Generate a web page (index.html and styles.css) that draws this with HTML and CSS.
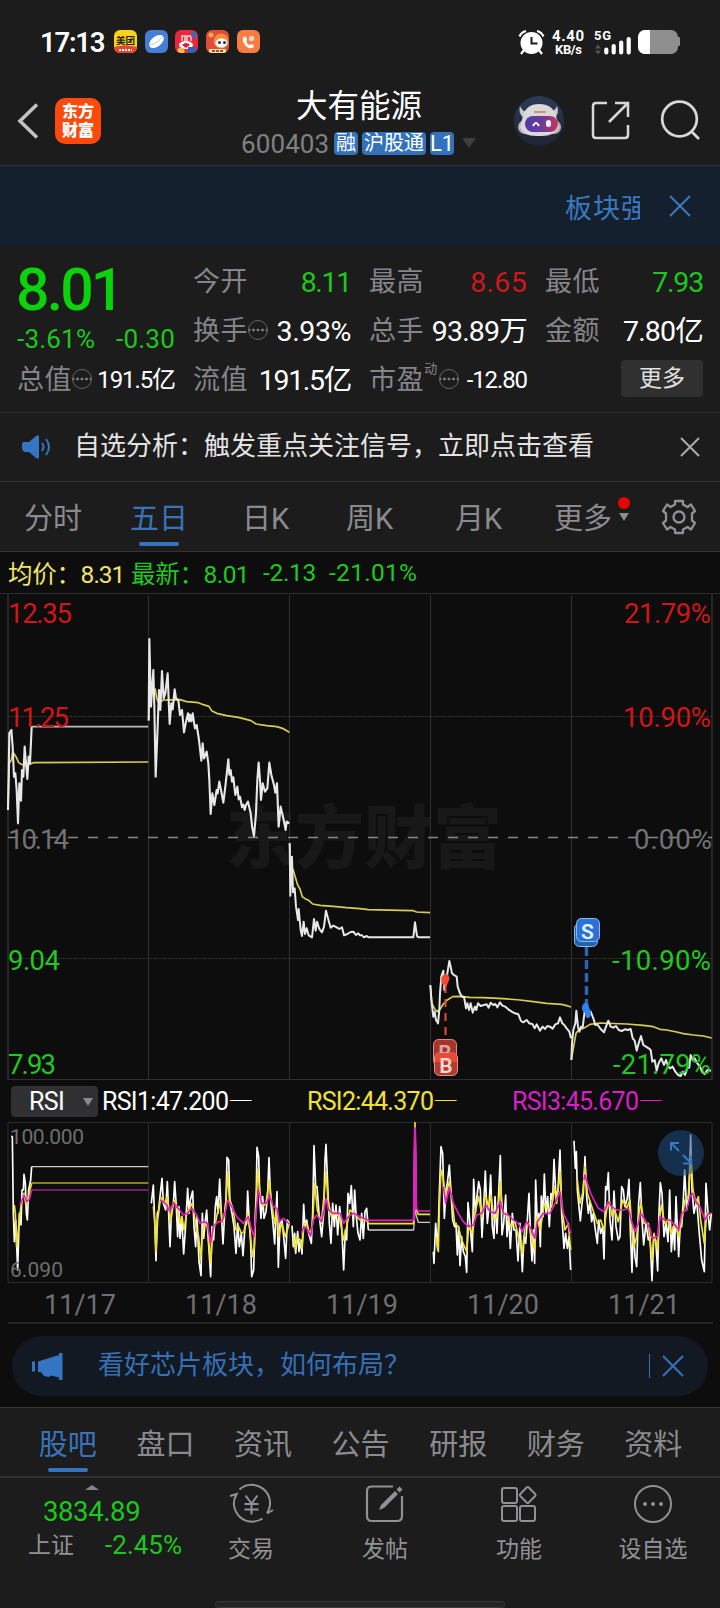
FILE: index.html
```html
<!DOCTYPE html>
<html lang="zh-CN">
<head>
<meta charset="utf-8">
<title>大有能源 600403</title>
<link rel="stylesheet" href="styles.css">
</head>
<body>
<div class="app">
  <header class="top">
    <div class="status">
      <span class="clock">17:13</span>
      <svg class="apps" width="146" height="24" viewBox="0 0 146 24">
        <defs><clipPath id="r1"><rect width="23" height="23" rx="6"/></clipPath></defs>
        <g clip-path="url(#r1)"><rect width="23" height="23" fill="#f8d21c"/><path d="M0 17Q11 14 23 17V23H0Z" fill="#e8442e"/><text x="2" y="13.500" class="cjk" font-size="9.500" font-weight="700" fill="#241c08">美团</text><path d="M5 20h13" stroke="#fff" stroke-width="2" stroke-dasharray="2 1"/></g>
        <g transform="translate(31)"><rect width="23" height="23" rx="6" fill="#437fd9"/><ellipse cx="11.500" cy="11.500" rx="8.500" ry="5" fill="#fff" transform="rotate(-38 11.500 11.500)"/><path d="M5 15Q12 14 18 6" stroke="#a9cdf7" fill="none"/></g>
        <g transform="translate(61)" clip-path="url(#r1)"><rect width="23" height="23" fill="#e9283d"/><path d="M7 11V6h3v5M12 11V6h4v5" stroke="#fbd3cf" stroke-width="1.500" fill="none"/><circle cx="19" cy="5" r="3" fill="#416ab5"/><ellipse cx="11" cy="15" rx="7" ry="4" fill="#fff"/><path d="M7 15q4-4 8 0l-4 3z" fill="#d71e35"/><circle cx="6" cy="21" r="3.500" fill="#f4bd4a"/><rect x="13" y="17" width="8" height="6" fill="#2e62b8"/></g>
        <g transform="translate(92)" clip-path="url(#r1)"><rect width="23" height="23" fill="#df4a3b"/><circle cx="5" cy="5" r="2.500" fill="#f6b04a"/><circle cx="15" cy="11" r="7.500" fill="#f28f3c"/><ellipse cx="15.500" cy="13" rx="6" ry="4.500" fill="#fff"/><circle cx="13.500" cy="12.500" r="1.500" fill="#33304a"/><circle cx="18.500" cy="12.500" r="1.500" fill="#33304a"/><path d="M3 19h17v4H3z" fill="#f8dfa5"/><path d="M6 21h11" stroke="#8c5b25" stroke-width="2" stroke-dasharray="3 1"/></g>
        <g transform="translate(123)"><rect width="23" height="23" rx="6" fill="#f67c41"/><path d="M7 6.500Q5 8 6 11.500 8 16.500 12.500 18.200 15.500 18.500 17.200 16.800 17 14.500 14.300 14 13 15.200 12 14.800 9.800 13.200 9.300 11.400 10.600 10 9.800 8 8.800 6 7 6.500Z" fill="#fff"/><circle cx="14.500" cy="8.500" r="2.700" fill="#ffd8c4"/></g>
      </svg>
      <svg class="sys" width="162" height="26" viewBox="518 29 162 26">
        <circle cx="531.500" cy="43" r="11" fill="#fff"/><path d="M531.500 37v6.500h6" stroke="#1c1c1c" stroke-width="2" fill="none"/><path d="M519.500 36.500Q521.500 32 526 31M543.500 36.500Q541.500 32 537 31M524 50l-3 4M539 50l3 4" stroke="#fff" stroke-width="2.200" fill="none"/>
        <g class="lat" fill="#fff" font-weight="700"><text x="552" y="41" font-size="15" textLength="32">4.40</text><text x="555" y="53.500" font-size="13" textLength="27">KB/s</text><text x="594" y="40" font-size="13" textLength="17">5G</text></g>
        <path d="M595 48.500l3-4 3 4zM595 50.500l3 4 3-4z" fill="#555"/>
        <path d="M606.300 49.500v3M613.700 46v6.500M621.200 42.500v10M628.700 39v13.500" stroke="#fff" stroke-width="4.200" stroke-linecap="round"/>
        <rect x="638" y="30" width="40" height="24" rx="7" fill="#8f8f8f"/><path d="M650 30h-5a7 7 0 0 0-7 7v10a7 7 0 0 0 7 7h5z" fill="#fff"/><rect x="677" y="37" width="3" height="9" rx="1" fill="#8f8f8f"/>
      </svg>
    </div>
    <div class="nav">
      <svg class="back" width="22" height="36" viewBox="0 0 22 36"><path d="M20 1.500 3 18l17 16.500" fill="none" stroke="#c2c2c2" stroke-width="3.600"/></svg>
      <div class="logo"><span>东方</span><span>财富</span></div>
      <div class="stock">
        <h1>大有能源</h1>
        <div class="sub"><span class="code">600403</span><b>融</b><b>沪股通</b><b class="l1">L1</b><i></i></div>
      </div>
      <svg class="robot" width="50" height="50" viewBox="0 0 50 50">
        <defs><linearGradient id="vis"><stop offset="0" stop-color="#4e3ba6"/><stop offset=".5" stop-color="#6a3c9b"/><stop offset="1" stop-color="#c4365b"/></linearGradient><linearGradient id="sky" x2="0" y2="1"><stop offset="0" stop-color="#2b3b59"/><stop offset="1" stop-color="#1e2431"/></linearGradient></defs>
        <circle cx="25" cy="25" r="25" fill="url(#sky)"/><path d="M6 10q-2 8 4 12l3-6q-5-1-7-6M43 10q3 8-3 12l-4-6q5-1 7-6" fill="#cbc6cb"/><rect x="4" y="24" width="43" height="14" rx="7" fill="#b5b0b5"/><path d="M25 8Q39 8 42 20L45 31Q40 41 25 40 9 41 6 31L9 20Q12 8 25 8Z" fill="#dcd7d8"/><path d="M20 16h12" stroke="#c69877" stroke-width="2"/><rect x="11" y="20" width="33" height="16" rx="8" fill="url(#vis)"/><path d="M19 30q3-6 6 0" fill="none" stroke="#fff" stroke-width="2"/><rect x="32" y="24" width="5" height="7" rx="2.500" fill="#eee"/>
      </svg>
      <svg class="share" width="40" height="40" viewBox="0 0 40 40"><path d="M16 2H5Q2 2 2 5v29q0 3 3 3h29q3 0 3-3V24M24 2h13v14M37 2 18 21" fill="none" stroke="#d8d8d8" stroke-width="2.500"/></svg>
      <svg class="find" width="41" height="41" viewBox="0 0 41 41"><circle cx="19.500" cy="19" r="17.300" fill="none" stroke="#d8d8d8" stroke-width="2.700"/><path d="M31 31l8 8" stroke="#d8d8d8" stroke-width="2.700"/></svg>
    </div>
  </header>

  <div class="ticker"><span class="crawl">板块强</span><svg width="22" height="22" viewBox="0 0 22 22"><path d="M1 1l20 20M21 1 1 21" stroke="#3b78c2" stroke-width="2"/></svg></div>

  <section class="quote">
    <div class="col">
      <div class="price">8.01</div>
      <div class="chg"><span>-3.61%</span><span>-0.30</span></div>
      <div class="row"><span class="k">总值</span><i class="tip"></i><span class="v sm">191.5亿</span></div>
    </div>
    <div class="col">
      <div class="row"><span class="k">今开</span><span class="v up n11">8.11</span></div>
      <div class="row"><span class="k">换手</span><i class="tip"></i><span class="v pct">3.93%</span></div>
      <div class="row"><span class="k">流值</span><span class="v n19">191.5亿</span></div>
    </div>
    <div class="col">
      <div class="row"><span class="k">最高</span><span class="v down">8.65</span></div>
      <div class="row"><span class="k">总手</span><span class="v">93.89万</span></div>
      <div class="row"><span class="k">市盈</span><sup>动</sup><i class="tip"></i><span class="v sm">-12.80</span></div>
    </div>
    <div class="col">
      <div class="row"><span class="k">最低</span><span class="v up n79">7.93</span></div>
      <div class="row"><span class="k">金额</span><span class="v">7.80亿</span></div>
      <div class="row"><button class="more">更多</button></div>
    </div>
  </section>

  <div class="notice">
    <svg width="29" height="24" viewBox="0 0 29 24"><path d="M1 7h6L14 1q3-2 3 1v20q0 3-3 1l-7-6H3q-3-1-3-4V10q0-2 1-3Z" fill="#3476c4"/><path d="M20 8q3 4 0 8M24 4q6 8 0 16" fill="none" stroke="#3476c4" stroke-width="2"/></svg>
    <span>自选分析：触发重点关注信号，立即点击查看</span>
    <svg width="20" height="20" viewBox="0 0 20 20"><path d="M1 1l18 18M19 1 1 19" stroke="#aaa" stroke-width="2"/></svg>
  </div>

  <nav class="periods">
    <span>分时</span><span class="on">五日</span><span>日K</span><span>周K</span><span>月K</span><span class="drop">更多<i class="dot"></i><i class="tri"></i></span>
    <svg width="36" height="36" viewBox="-18 -18 36 36"><path d="M-4-16H4V-12.500L8.500-10 12-12.500 16-6 13-3.500V3.500L16 6 12 12.500 8.500 10 4 12.500V16H-4V12.500L-8.500 10-12 12.500-16 6-13 3.500V-3.500L-16-6-12-12.500-8.500-10-4-12.500Z" fill="none" stroke="#919195" stroke-width="2.300" stroke-linejoin="round"/><circle r="5.500" fill="none" stroke="#919195" stroke-width="2.300"/></svg>
  </nav>

  <div class="latest"><span class="avg">均价：<em>8.31</em></span><span class="new">最新：<em>8.01</em></span><span>-2.13</span><span class="total">-21.01%</span></div>

  <svg class="price-chart" width="720" height="488" viewBox="0 593 720 488">
    <text x="226" y="863" class="cjk" font-size="69" font-weight="900" textLength="276" fill="#181818">东方财富</text>
    <g fill="none" stroke="#303032" stroke-width="1">
      <path d="M0 593.500H720M7.500 1079.500H712.500M148.500 595V1080M289.500 595V1080M430.500 595V1080M571.500 595V1080"/>
      <path d="M8 594V1080M712 594V1080" stroke-width="1.500"/>
      <path d="M8 716.500H712M8 958.500H712" stroke="#38383a" stroke-dasharray="1.500 1"/>
      <path d="M8 837.500H712" stroke="#868686" stroke-width="1.300" stroke-dasharray="10 10"/>
    </g>
    <g fill="none" stroke-linejoin="round">
      <g transform="translate(0 480) scale(.33333)" stroke="#d9cc55" stroke-width="5">
        <path d="M24 990 28 850 34 840 38 815 48 830 56 848 64 853 84 855 100 848 445 846"/>
        <path d="M446 720 450 600 460 625 466 628 470 655 476 668 490 660 540 659 560 665 595 668 610 674 627 679 635 692 650 700 680 707 715 712 730 716 753 722 768 732 800 737 830 740 850 746 868 757"/>
      </g>
      <g transform="translate(0 830) scale(.33333)" stroke="#d9cc55" stroke-width="5">
        <path d="M869 40 871 110 879 118 886 142 893 165 900 177 907 200 915 206 926 211 938 222 960 226 1000 229 1040 233 1080 236 1105 239 1200 241 1240 242 1250 246 1290 248"/>
        <path transform="translate(1080)" d="M211 465 216 520 224 537 232 545 240 538 250 522 262 510 278 500 300 499 330 502 370 503 430 506 480 510 520 515 560 520 605 523 620 527 633 531M634 690 640 655 648 610 656 600 666 597 676 592 690 583 720 579 800 582 850 586 880 590 900 598 920 600 950 606 970 611 1000 615 1030 618 1055 624"/>
      </g>
      <g transform="translate(0 480) scale(.33333)" stroke="#e8e8e8" stroke-width="6.300">
        <path d="M24 990 28 760 34 750 38 800 42 890 46 880 50 930 54 1030 58 910 63 962 66 870 70 890 74 800 78 850 82 897 86 830 90 850 95 740"/><path d="M95 740H445" stroke="#bbb" stroke-width="5"/>
        <path d="M446 722 448 477 451 600 453 680 460 570 463 680 467 890 473 740 477 630 481 690 486 573 491 655 496 640 503 580 506 660 509 732 514 670 518 688 524 628 528 655 535 660 540 705 546 690 552 757 558 725 564 700 567 724 570 704 574 724 578 700 582 728 585 745 590 735 597 780 604 842 608 790 612 835 620 815 625 850 628 900 632 1002 637 940 643 975 650 930 653 940 658 905 664 935 670 968 676 920 685 838 688 884 692 870 696 905 700 892 706 945 712 920 716 958 720 950 726 982 730 974 734 990 738 975 744 965 752 1000 757 1045 762 1068 768 1000 772 900 776 848 780 900 783 960 788 910 795 935 802 925 808 848 814 885 822 915 826 938 831 910 836 1040 842 980 850 1015 857 1050 860 1025 868 1030"/>
      </g>
      <g transform="translate(0 830) scale(.33333)" stroke="#e8e8e8" stroke-width="6">
        <path d="M869 40 871 197 876 80 879 187 884 175 888 230 894 270 896 237 902 300 906 318 911 275 915 312 920 295 926 316 936 322 942 267 947 302 951 275 958 297 966 307 972 290 978 242 986 272 992 293 1000 287 1010 292 1018 297 1026 292 1032 316 1042 312 1052 306 1060 305 1068 315 1075 310 1080 316 1086 316 1092 322 1100 318 1105 322 1240 322 1245 277 1251 318 1255 322 1290 322"/>
        <path transform="translate(1080)" d="M211 465 214 510 220 560 224 545 228 570 234 580 238 540 240 490 244 440 250 422 253 480 258 460 262 430 268 393 272 410 276 430 282 435 290 440 293 470 300 490 306 500 312 500 318 535 322 520 327 540 332 520 338 548 345 530 349 540 354 520 362 528 372 525 380 523 386 533 392 518 400 525 406 522 412 532 420 517 427 527 436 530 445 538 455 545 465 550 475 553 483 573 490 577 500 570 508 580 518 583 524 595 530 583 540 602 548 590 555 597 562 588 570 590 578 596 586 583 594 580 600 562 607 580 613 585 620 595 628 605 633 625M634 690 636 640 640 600 646 580 649 542 654 590 658 605 663 590 668 592 672 560 677 525 683 560 692 545 700 565 706 585 712 583 722 597 732 607 738 590 745 572 752 590 760 593 768 588 776 600 785 603 795 598 803 600 812 597 818 625 824 632 830 662 836 640 843 618 850 645 858 650 866 655 872 660 877 695 884 690 890 722 896 700 904 685 912 705 918 690 924 708 930 715 938 710 946 725 954 735 962 738 968 725 975 735 982 715 988 712 992 675 998 690 1004 685 1012 700 1020 710 1026 725 1034 732 1042 720 1053 722"/>
      </g>
    </g>
    <g class="lat axis">
      <g fill="#d01616"><text x="8" y="623" textLength="64">12.35</text><text x="8" y="727" textLength="61">11.25</text><text x="624" y="623" textLength="87">21.79%</text><text x="623" y="727" textLength="88">10.90%</text></g>
      <g fill="#737373"><text x="8" y="849" textLength="61">10.14</text><text x="634" y="849" textLength="78">0.00%</text></g>
      <g fill="#20c820"><text x="8" y="970" textLength="52">9.04</text><text x="8" y="1074" textLength="48">7.93</text><text x="612" y="970" textLength="99">-10.90%</text><text x="613" y="1074" textLength="98">-21.79%</text></g>
    </g>
    <path d="M445.500 985V1040" stroke="#ee4932" stroke-width="2" stroke-dasharray="8 6"/><path d="M441.500 978q1-3.500 4-4 4 .5 4 5-1 3-3 7l-1.500-2-1 2q-4-4-2.500-8" fill="#f4492f"/>
    <g class="lat tag"><rect x="433.500" y="1039.500" width="23" height="26" rx="5" fill="#a7342a" stroke="#dd8c80"/><text x="445" y="1060" fill="#d9a8a2">B</text><rect x="434.500" y="1053" width="23" height="22.500" rx="5" fill="#b03b2e" stroke="#e2968a"/><path d="M435 1057q0-4 5-4h12q5 0 5 4v5h-22z" fill="#e74a38"/><text x="446" y="1072.500" fill="#f4d8d4">B</text></g>
    <path d="M586.500 947V1007" stroke="#2766b5" stroke-width="3.500" stroke-dasharray="9 4"/><ellipse cx="585.500" cy="1008" rx="3.500" ry="5" fill="#3184ed"/><ellipse cx="588" cy="1013" rx="3" ry="5" fill="#3184ed"/>
    <g class="lat tag"><rect x="574.500" y="923.500" width="23" height="23" rx="5" fill="#2162ae" stroke="#94b9e8"/><rect x="576.500" y="918.500" width="23" height="23" rx="5" fill="#2a72d8" stroke="#94b9e8"/><text x="587.500" y="938.500" fill="#e8f1ff">S</text></g>
  </svg>

  <div class="rsi-head"><button>RSI<i class="tri"></i></button><span class="w">RSI1:47.200<em>—</em></span><span class="y">RSI2:44.370<em>—</em></span><span class="m">RSI3:45.670<em>—</em></span></div>

  <svg class="rsi-chart" width="720" height="162" viewBox="0 1122 720 162">
    <path d="M8 1122.500H712M8 1282.500H712M8 1122V1283M148.500 1122V1283M289.500 1122V1283M430.500 1122V1283M571.500 1122V1283M712 1122V1283" fill="none" stroke="#2c2c2e"/>
    <g transform="translate(0 1080) scale(.33333)" fill="none" stroke-width="5" stroke-linejoin="round">
      <g stroke="#fff">
        <path d="M34 168 37 170 40 400 43 485 47 420 53 570 58 400 63 435 66 330 70 330 72 283 76 310 79 400 82 420 86 330 92 300 95 260"/><path d="M95 260H445" stroke="#ccc" stroke-width="4"/>
        <path d="M454 370 460 315 464 420 468 542 472 400 476 390 480 350 486 295 490 370 497 390 502 305 506 400 510 500 515 380 520 375 524 305 529 380 533 470 537 380 540 475 545 410 551 522 556 450 563 325 567 400 571 360 578 333 582 440 587 500 591 410 597 545 603 587 607 400 611 475 615 430 620 390 625 480 632 590 636 440 641 480 646 380 650 350 654 400 659 297 664 400 669 492 674 400 678 360 681 232 686 240 690 370 696 400 702 440 708 520 713 430 718 500 724 460 729 527 735 440 740 430 743 333 748 430 752 490 755 590 761 570 765 430 769 330 771 202 776 230 780 370 783 415 788 350 792 415 798 395 803 340 807 233 812 360 818 420 824 492 828 400 831 335 835 562 840 430 846 420 851 470 857 535 862 420 868 430"/>
        <path d="M876 437 880 500 884 460 887 520 893 455 897 515 902 480 906 522 911 373 915 440 920 420 926 460 934 490 938 400 942 197 947 320 951 320 957 400 965 470 971 400 975 240 978 193 982 290 988 430 993 490 998 370 1003 440 1008 375 1013 465 1019 380 1025 440 1031 570 1036 450 1040 480 1044 340 1049 370 1054 317 1060 440 1064 330 1068 400 1074 460 1080 480 1085 400 1090 475 1095 395 1100 385 1105 450"/><path d="M1105 450H1241L1245 390 1250 410 1255 427H1290" stroke="#ccc" stroke-width="4"/>
        <path transform="translate(1080)" d="M220 515 222 550 227 430 233 510 238 340 243 200 248 220 253 415 258 330 262 310 268 255 272 320 278 420 284 440 288 430 292 525 296 440 300 557 305 470 310 515 316 530 320 577 324 368 330 430 337 515 341 298 346 400 351 350 356 305 361 330 366 472 371 380 376 273 382 430 387 380 392 285 397 440 402 475 405 350 411 460 416 340 421 227 426 465 431 430 437 345 441 470 446 410 451 505 457 400 462 450 468 450 474 543 480 430 487 575 492 470 497 490 502 420 507 340 512 470 516 543 520 450 524 550 527 300 532 430 537 400 541 500 544 348 549 410 553 282 558 400 563 350 568 440 573 340 578 360 582 238 588 350 594 330 600 210 605 400 612 505 617 460 622 505 627 470 632 570M642 182 646 265 649 215 652 330 661 423 665 380 670 340 675 230 680 350 685 400 690 365 695 425 700 400 706 450 712 490 716 420 722 460 728 440 732 537 737 320 741 330 745 278 750 420 756 480 762 333 768 440 775 480 780 470 785 320 790 330 795 380 802 355 807 298 811 450 816 577 820 440 825 530 830 560 836 370 841 308 846 420 851 495 858 430 865 480 870 470 876 602 881 480 887 480 893 573 897 400 901 308 906 340 912 470 918 430 924 485 929 330 934 515 940 440 944 510 948 350 956 530 961 430 965 440 970 360 974 270 980 390 987 340 992 165 996 330 1002 400 1010 360 1017 450 1025 540 1033 575 1038 310 1044 400 1049 450 1054 400"/>
      </g>
      <g stroke="#f0e030">
        <path d="M43 375 46 400 50 500 56 440 62 385 68 350 72 340 78 375 84 360 90 330 95 309"/><path d="M95 309H445" stroke="#b5a52c"/>
        <path d="M460 380 464 420 468 515 473 420 480 365 488 350 494 375 502 350 508 400 512 425 520 370 526 360 532 390 540 430 546 410 552 450 560 400 568 385 576 370 582 400 588 440 596 470 602 540 608 450 616 430 622 440 632 550 638 460 646 430 652 400 660 370 668 430 676 390 683 275 688 355 700 390 708 450 716 440 724 460 732 455 742 400 750 450 757 530 763 500 768 380 773 268 780 340 788 380 798 370 808 300 815 370 824 430 831 390 836 470 845 430 856 470 868 430"/>
        <path d="M880 470 886 510 892 470 900 480 906 505 912 430 920 430 930 465 938 430 944 310 952 390 964 430 972 350 978 275 984 360 994 410 1005 395 1018 410 1031 480 1040 440 1050 390 1062 400 1080 420 1100 420 1105 431 1241 431 1245 128 1249 390 1255 403 1290 403"/>
        <path transform="translate(1080)" d="M228 470 235 515 238 380 243 270 249 290 256 350 268 305 275 350 284 430 295 440 305 480 320 515 326 440 338 460 345 400 356 350 366 410 376 345 386 380 393 345 402 420 412 410 421 305 428 400 440 400 452 440 465 425 475 470 487 520 495 440 507 430 516 480 524 510 530 410 541 450 553 370 565 390 575 380 583 320 590 370 600 275 606 390 615 450 625 430 632 510M652 300 660 370 668 340 675 260 682 340 692 370 702 400 712 430 722 420 732 450 740 390 747 360 757 410 764 390 775 425 788 360 800 385 810 360 816 460 822 500 830 470 838 390 843 370 852 430 865 430 876 540 882 460 893 510 898 420 904 375 914 430 925 420 932 460 945 430 956 470 964 430 975 360 985 350 992 225 999 330 1008 370 1015 350 1022 420 1033 490 1040 400 1054 410"/>
      </g>
      <g stroke="#e21fc4">
        <path d="M60 375 72 345 80 365 88 358 95 330"/><path d="M95 330H445" stroke="#94228c"/>
        <path d="M480 360 490 365 500 375 510 395 520 368 535 385 550 405 562 400 575 385 590 405 600 430 612 425 622 430 632 490 640 440 655 425 665 425 675 400 683 360 695 380 710 410 730 430 745 410 755 450 762 470 768 400 775 330 785 370 800 370 808 345 820 380 831 385 838 425 850 415 868 432"/>
        <path d="M905 460 911 440 920 445 932 468 940 420 950 405 965 425 972 390 978 355 986 390 1000 400 1020 400 1031 430 1045 410 1060 400 1080 410 1105 421 1241 421 1245 150 1249 385 1255 393 1290 393"/><path d="M1242 421 1245 145 1248 385" stroke-width="7"/>
        <path transform="translate(1080)" d="M250 320 257 370 268 322 280 370 295 400 310 425 325 440 340 435 350 405 365 400 378 375 390 395 405 400 421 365 430 400 445 405 460 420 475 430 487 455 500 425 515 450 524 475 532 425 550 400 570 400 585 370 600 335 610 400 620 420 632 460M672 300 675 285 682 310 692 340 702 360 715 385 732 395 745 365 755 380 770 390 790 390 805 385 815 425 825 455 835 430 842 400 852 415 870 445 876 475 893 470 900 410 915 420 930 420 945 435 956 450 965 400 980 390 990 350 998 340 1010 370 1020 380 1035 420 1045 400 1054 400"/>
      </g>
    </g>
    <g class="lat" fill="#6e6e70" font-size="21"><text x="10" y="1144" textLength="74">100.000</text><text x="10" y="1277" textLength="53">6.090</text></g>
    <circle cx="681" cy="1153" r="23" fill="#1f4b80" fill-opacity=".56"/>
    <path d="M671 1150.500V1143H679M672 1144l7 7M691 1156V1163.500H683M690 1162l-7-7" fill="none" stroke="#3678c5" stroke-width="2"/>
  </svg>

  <div class="dates"><span>11/17</span><span>11/18</span><span>11/19</span><span>11/20</span><span>11/21</span></div>

  <div class="promo-wrap"><div class="promo">
    <svg width="31" height="27" viewBox="0 0 31 27"><path d="M0 8.500h3v10H0zM6 8.500 27 2V0h3.500v27H27v-2.500L19 22.500 17 24l-5-1-3-4H6z" fill="#3375c3"/></svg>
    <span>看好芯片板块，如何布局？</span><i class="bar"></i>
    <svg width="22" height="22" viewBox="0 0 22 22"><path d="M1 1l20 20M21 1 1 21" stroke="#366fb5" stroke-width="2.200"/></svg>
  </div></div>

  <nav class="sections"><span class="on">股吧</span><span>盘口</span><span>资讯</span><span>公告</span><span>研报</span><span>财务</span><span>资料</span></nav>

  <footer class="actions">
    <div class="index"><i class="up-tri"></i><strong>3834.89</strong><div><span>上证</span><em>-2.45%</em></div></div>
    <div class="act"><svg width="44" height="40" viewBox="0 0 44 40"><g fill="none" stroke="#919195" stroke-width="2"><path d="M10.500 5.500A18.300 18.300 0 0 1 39 27.500L38 29M33.500 34.500A18.300 18.300 0 0 1 7.500 10L1 12M7.500 10.500 6 14M38 29.500l6-3.500M16.500 11.500l6 8 6-8M22.500 19.500v11M15.500 20h14M15.500 25.500h14"/></g></svg><span>交易</span></div>
    <div class="act"><svg width="40" height="40" viewBox="0 0 40 40"><path d="M28 2.500H7Q2 2.500 2 7v25q0 5 5 5h25q5 0 5-5V12" fill="none" stroke="#919195" stroke-width="2.200"/><path d="M14 26l2-5L30 7l3 3L19 24zM31.500 5.500l3-3 3 3-3 3z" fill="#919195"/></svg><span>发帖</span></div>
    <div class="act"><svg width="40" height="40" viewBox="0 0 40 40"><g fill="none" stroke="#919195" stroke-width="2"><rect x="3" y="4" width="15" height="15" rx="2"/><rect x="3" y="22" width="15" height="15" rx="2"/><rect x="21" y="22" width="15" height="15" rx="2"/><rect x="22.700" y="5" width="12" height="12" rx="1.500" transform="rotate(45 28.700 11)"/></g></svg><span>功能</span></div>
    <div class="act"><svg width="40" height="40" viewBox="0 0 40 40"><circle cx="20" cy="20" r="18" fill="none" stroke="#919195" stroke-width="2"/><g fill="#919195"><circle cx="12" cy="20" r="2"/><circle cx="20" cy="20" r="2"/><circle cx="28" cy="20" r="2"/></g></svg><span>设自选</span></div>
    <i class="home"></i>
  </footer>
</div>
</body>
</html>
```

FILE: styles.css
```css
* { box-sizing: border-box; }
body { margin: 0; background: #0d0d0d; }
.app {
  width: 720px;
  height: 1608px;
  overflow: hidden;
  color: #fff;
  font-family: Roboto, "Noto Sans CJK SC", sans-serif;
  font-kerning: none;
}
i, em { font-style: normal; }
svg { display: block; flex: none; overflow: visible; }
button { border: 0; padding: 0; font: inherit; color: inherit; }
.cjk { font-family: "Noto Sans CJK SC", sans-serif; }
.lat { font-family: Roboto, sans-serif; }

.top { height: 166px; background: #1c1c1c; border-bottom: 1px solid #343434; }
.status { display: flex; align-items: center; height: 84px; padding: 0 40px; }
.clock { width: 74px; font-size: 27.5px; font-weight: 600; line-height: 30px; letter-spacing: -1.2px; padding-top: 1px; }
.sys { margin-left: auto; }
.nav { display: flex; align-items: flex-start; height: 80px; padding-left: 17px; }
.back { margin-top: 19px; }
.logo {
  display: flex; flex-direction: column; align-items: center; justify-content: center;
  width: 46px; height: 46px; margin: 14px 0 0 16px; border-radius: 10px; background: #fb4a0c;
  font-size: 16px; font-weight: 900; line-height: 19px;
}
.stock { width: 250px; margin-left: 137px; }
h1 { margin: 0; padding: 1px 0 0 58px; font-size: 31.5px; font-weight: 400; line-height: 44px; white-space: nowrap; }
.sub { display: flex; align-items: center; height: 24px; margin-top: 2px; padding-left: 3px; gap: 4px; }
.code { width: 89px; padding-top: 2px; font-size: 26px; letter-spacing: 0.1px; color: #808085; }
.sub b { height: 23px; padding: 0 2px; border-radius: 4px; background: #3272bc; font-size: 20px; font-weight: 400; line-height: 22px; }
.sub .l1 { width: 24px; padding: 0; text-align: center; font-size: 22px; line-height: 24px; }
.sub i { margin-left: 4px; border: 7px solid transparent; border-top: 10px solid #3e3e40; border-bottom: 0; }
.robot { margin: 12px 0 0 26px; }
.share { margin: 17px 0 0 27px; }
.find { margin: 16px 0 0 29px; }

.ticker { display: flex; align-items: center; height: 80px; padding-left: 565px; background: #15202e; color: #3b78c2; font-size: 27px; }
.crawl { width: 75px; overflow: hidden; white-space: nowrap; letter-spacing: 1px; margin-top: 1px; }
.ticker svg { margin-left: 29px; }

.quote { display: grid; grid-template-columns: repeat(4, 158px); column-gap: 18px; height: 167px; padding: 12px 0 0 17px; background: #1c1c1c; border-bottom: 1px solid #2c2c2c; }
.row { display: flex; align-items: center; height: 49px; line-height: 49px; white-space: nowrap; }
.k { font-size: 27px; letter-spacing: .6px; color: #858589; }
.v { margin-left: auto; font-size: 28.5px; letter-spacing: -0.8px; }
.v.sm { font-size: 24px; letter-spacing: -1.1px; }
.v.pct { letter-spacing: -0.4px; }
.up { color: #1cc81c; }
.down { color: #cc1818; letter-spacing: 0.3px; }
.v.n11, .v.n19 { letter-spacing: -1.3px; }
.v.n79 { letter-spacing: -1.2px; }
.tip { flex: none; width: 20px; height: 20px; border: 1.500px solid #66666a; border-radius: 50%; background: radial-gradient(circle, #7c7c80 1.200px, transparent 1.700px) center / 4.500px 6px repeat-x; margin-top: -4px; }
.price { height: 64px; font-size: 59px; font-weight: 500; line-height: 63px; letter-spacing: -2.9px; text-indent: -1px; color: #0bd20b; }
.chg { display: flex; justify-content: space-between; height: 34px; font-size: 26px; line-height: 34px; letter-spacing: 0.2px; color: #1cc81c; }
sup { align-self: flex-start; font-size: 13px; line-height: 25px; color: #858589; margin-right: 2px; }
.more { width: 83px; height: 37px; margin: -4px 0 0 76px; border-radius: 4px; background: #303030; font-size: 23px; line-height: 36px; color: #e2e2e2; }

.notice { display: flex; align-items: center; height: 69px; padding-left: 22px; background: #1c1c1c; border-bottom: 1px solid #343434; font-size: 26px; line-height: 36px; color: #e4e4e4; white-space: nowrap; }
.notice span { flex: none; width: 629px; padding: 0 0 2px 23px; }

.periods { display: flex; align-items: center; height: 70px; background: #1c1c1c; border-bottom: 1px solid #343434; font-size: 29px; color: #8b8b8f; padding-left: 24px; }
.periods span { position: relative; width: 106px; white-space: nowrap; height: 66px; line-height: 70px; }
.periods span:nth-child(2) { width: 112px; }
.periods span:nth-child(3) { width: 104px; }
.periods span:nth-child(4) { width: 109px; }
.periods span:nth-child(5) { width: 99px; }
.periods .on, .sections .on { color: #3874bd; }
.on::after { content: ""; position: absolute; left: 9px; bottom: 4px; width: 40px; height: 4px; border-radius: 2px; background: #3874bd; }
.dot { position: absolute; left: 64px; top: 13px; width: 12px; height: 12px; border-radius: 50%; background: #ef0000; }
.drop .tri { position: absolute; left: 65px; top: 29px; }
.tri { border: 5px solid transparent; border-top: 8px solid #8b8b8f; border-bottom: 0; }
.periods svg { margin-left: 1px; }

.latest { display: flex; align-items: center; height: 41px; padding-left: 8px; font-size: 24.5px; letter-spacing: -0.3px; color: #20c820; white-space: nowrap; }
.latest .avg { width: 123px; color: #f2e36b; }
.latest .new { width: 132px; }
.latest span:nth-child(3) { width: 66px; }
.latest .total { letter-spacing: 0.3px; }
.latest em { letter-spacing: -1px; }
.latest .new em { letter-spacing: -0.6px; }
.axis { font-size: 27.5px; }
.tag { font-size: 21px; font-weight: 600; text-anchor: middle; }

.rsi-head { display: flex; align-items: center; height: 41px; padding-left: 11px; font-size: 25px; white-space: nowrap; }
.rsi-head button { display: flex; align-items: center; width: 87px; height: 31px; padding-left: 18px; border-radius: 4px; background: #303032; letter-spacing: -0.6px; }
.rsi-head .tri { margin-left: 19px; }
.rsi-head span { letter-spacing: -0.7px; line-height: 40px; }
.rsi-head em { font-family: "Noto Sans CJK SC", sans-serif; font-size: 25px; line-height: 1; }
.w { width: 205px; margin-left: 4px; }
.y { width: 205px; color: #f0e236; }
.m { color: #d81fc8; }

.dates { display: grid; grid-template-columns: repeat(5, 141px); width: 705px; height: 40px; margin-left: 8px; border-bottom: 2px solid #252527; font-size: 27px; line-height: 42px; text-align: center; text-indent: 3px; color: #6f6f72; }
.promo-wrap { height: 83px; padding: 12px 12px 0; }
.promo { display: flex; align-items: center; height: 60px; padding-left: 20px; border-radius: 30px; background: #121922; color: #3770b5; font-size: 26px; line-height: 36px; }
.promo span { flex: none; width: 554px; padding: 0 0 3px 35px; }
.bar { flex: none; width: 1px; height: 24px; margin: 0 12px 0 32px; background: #3770b5; }

.sections { display: grid; grid-template-columns: repeat(7, 97.600px); height: 71px; padding-left: 19px; background: #1c1c1c; border-top: 1px solid #343434; border-bottom: 2px solid #303030; font-size: 29px; line-height: 75px; text-align: center; color: #8b8b8f; }
.sections span { position: relative; height: 68px; }
.sections .on::after { left: 29px; bottom: 4px; }

.actions { position: relative; display: flex; height: 131px; background: #1c1c1c; color: #929296; font-size: 23px; }
.index { width: 184px; padding: 6px 0 0 28px; }
.index strong { display: block; margin-left: 15px; font-size: 27.5px; font-weight: 400; line-height: 34px; letter-spacing: -0.4px; color: #1cc81c; }
.index div { display: flex; justify-content: space-between; align-items: center; width: 154px; line-height: 33px; }
.index em { font-size: 26px; letter-spacing: 0; color: #1cc81c; }
.up-tri { display: block; width: 14px; margin: 1px 0 5px 57px; border: 7px solid transparent; border-bottom: 5px solid #858588; border-top: 0; }
.act { display: flex; flex-direction: column; align-items: center; width: 134px; padding-top: 6px; line-height: 34px; }
.act span { margin-top: 9px; }
.home { position: absolute; left: 215px; bottom: 1px; width: 290px; height: 7px; border: 1px solid #393939; border-radius: 4px; background: #242424; }
```
